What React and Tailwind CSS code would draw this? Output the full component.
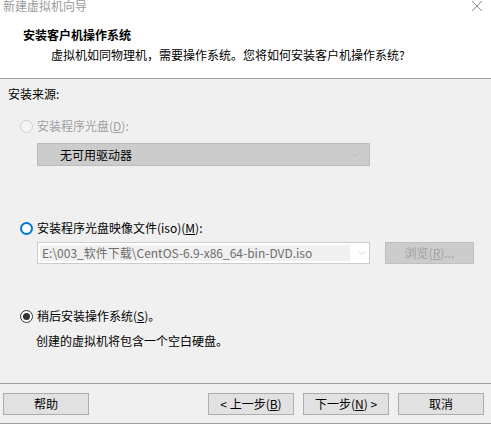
import { ChevronDown } from 'lucide-react'

const font = { fontFamily: '"Noto Sans CJK SC", "Noto Sans", sans-serif' }

function Radio({ state }) {
  // state: 'disabled' | 'focus' | 'checked'
  if (state === 'disabled') {
    return <span className="w-[13px] h-[13px] rounded-full border border-[#cccccc] bg-[#f5f5f5] shrink-0" />
  }
  if (state === 'focus') {
    return <span className="w-[13px] h-[13px] rounded-full border-2 border-[#0078d7] bg-white shrink-0" />
  }
  return (
    <span className="w-[13px] h-[13px] rounded-full border border-[#333333] bg-white shrink-0 flex items-center justify-center">
      <span className="w-[7px] h-[7px] rounded-full bg-[#333333]" />
    </span>
  )
}

function Btn({ children, className = '' }) {
  return (
    <button className={`h-[22px] w-[86px] bg-[#e1e1e1] border border-[#adadad] text-[12px] leading-[20px] text-black ${className}`}>
      {children}
    </button>
  )
}

export default function App() {
  return (
    <div className="w-[491px] h-[424px] flex flex-col bg-[#f0f0f0] overflow-hidden text-[12px] text-black" style={font}>
      <header className="h-[79px] bg-white border-b border-[#a0a0a0] shrink-0">
        <div className="flex items-start justify-between h-[14px] -mt-[2px]">
          <span className="pl-[3px] text-[#9a9a9a] leading-[16px]">新建虚拟机向导</span>
          <svg width="10" height="10" viewBox="0 0 10 10" className="mt-[3px] mr-[9px]" stroke="#8a8a8a" strokeWidth="1">
            <path d="M0 0L10 10M10 0L0 10" />
          </svg>
        </div>
        <h1 className="pl-[23px] mt-[15px] font-bold leading-[16px]">安装客户机操作系统</h1>
        <p className="pl-[51px] mt-[4px] leading-[16px]">虚拟机如同物理机，需要操作系统。您将如何安装客户机操作系统?</p>
      </header>

      <main className="flex-1 flex flex-col">
        <div className="pl-[8px] mt-[7px] leading-[16px]">安装来源:</div>

        <label className="flex items-center gap-[4px] pl-[20px] mt-[16px] leading-[16px] text-[#a0a0a0]">
          <Radio state="disabled" />
          <span>安装程序光盘(<u>D</u>):</span>
        </label>
        <div className="ml-[37px] mt-[9px] w-[333px] h-[23px] bg-[#cccccc] border border-[#bcbcbc] flex items-center justify-between">
          <span className="pl-[22px] leading-[16px]">无可用驱动器</span>
          <ChevronDown size={12} strokeWidth={1} className="mr-[8px] text-[#a8a8a8]" />
        </div>

        <label className="flex items-center gap-[4px] pl-[20px] mt-[54px] leading-[16px]">
          <Radio state="focus" />
          <span>安装程序光盘映像文件(iso)(<u>M</u>):</span>
        </label>
        <div className="flex items-center mt-[6px]">
          <div className="ml-[37px] w-[333px] h-[22px] bg-white border border-[#cccccc] flex items-center">
            <div className="ml-[2px] w-[310px] h-[16px] bg-[#f0f0f0] text-[#6d6d6d] leading-[16px] pl-[2px] whitespace-nowrap overflow-hidden">
              E:\003_软件下载\CentOS-6.9-x86_64-bin-DVD.iso
            </div>
            <ChevronDown size={12} strokeWidth={1} className="ml-[6px] text-[#a8a8a8]" />
          </div>
          <button className="ml-[15px] w-[89px] h-[22px] bg-[#cccccc] border border-[#bfbfbf] text-[#a0a0a0] leading-[20px]">
            浏览(<u>R</u>)...
          </button>
        </div>

        <label className="flex items-center gap-[4px] pl-[20px] mt-[44px] leading-[16px]">
          <Radio state="checked" />
          <span>稍后安装操作系统(<u>S</u>)。</span>
        </label>
        <p className="pl-[36px] mt-[9px] leading-[16px]">创建的虚拟机将包含一个空白硬盘。</p>

        <div className="mt-[34px] border-t border-[#a0a0a0] flex items-start pt-[9px] pb-[8px]">
          <Btn className="ml-[3px]">帮助</Btn>
          <Btn className="ml-[119px]">&lt; 上一步(<u>B</u>)</Btn>
          <Btn className="ml-[9px]">下一步(<u>N</u>) &gt;</Btn>
          <Btn className="ml-[9px]">取消</Btn>
        </div>
        <div className="border-t border-[#a0a0a0]" />
      </main>
    </div>
  )
}
